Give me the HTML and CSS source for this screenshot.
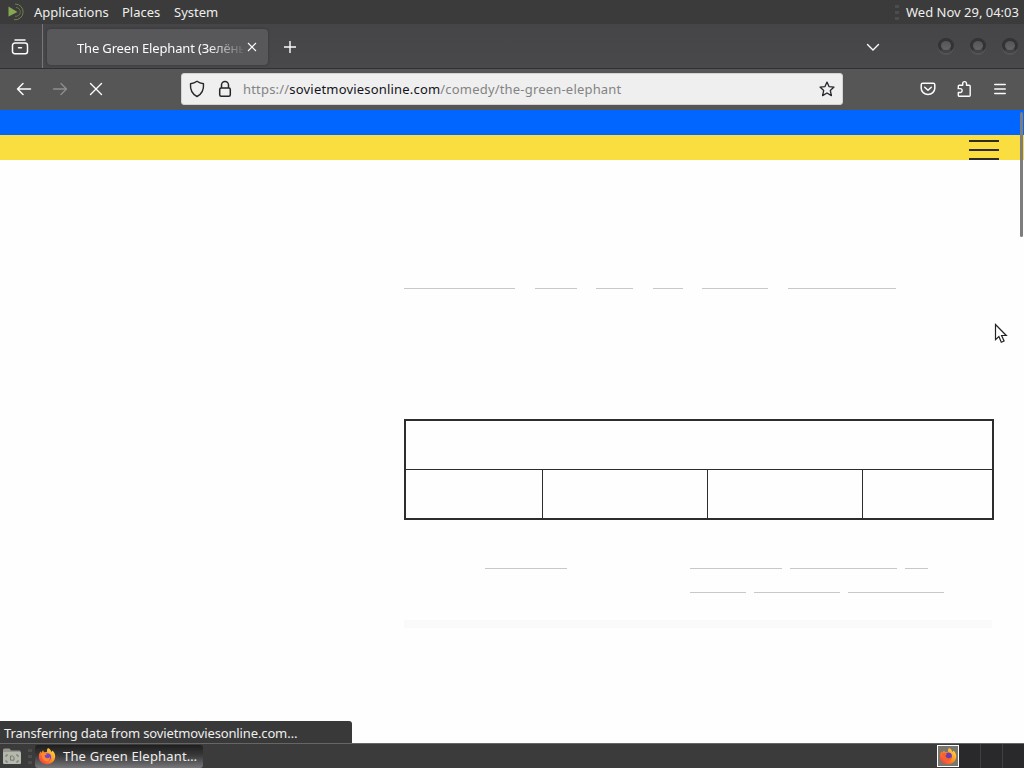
FILE: index.html
```
<!DOCTYPE html>
<html lang="en">
<head>
  <meta charset="utf-8">
  <title>The Green Elephant</title>
  <link rel="stylesheet" href="styles.css">
</head>
<body>
  <div class="desktop">

    <!-- desktop panel -->
    <header class="panel">
      <svg class="logo" width="22" height="24" viewBox="0 0 22 24" fill="none">
        <path d="M1.500 6.500 10.500 12 1.500 16.500z" fill="#87a752"/>
        <path d="M8 4a7.900 7.900 0 1 1-1 15.700" stroke="#6d8449"/>
        <path d="M9 7.500a4.400 4.400 0 1 1-1 8.700" stroke="#66734f"/>
      </svg>
      <nav class="menu">
        <span class="apps">Applications</span>
        <span class="places">Places</span>
        <span class="system">System</span>
      </nav>
      <div class="grip"><i></i><i></i><i></i></div>
      <span class="clock">Wed Nov 29, 04:03</span>
    </header>

    <!-- tabs -->
    <div class="tabbar">
      <div class="view">
        <svg width="18" height="18" viewBox="0 0 18 18" fill="none" stroke="#fbfbfe" stroke-width="1.500" stroke-linecap="round">
          <path d="M4 2h10"/>
          <path d="M1.500 7.500a2.500 2.500 0 0 1 2.500-2.500h10a2.500 2.500 0 0 1 2.500 2.500v6a2.200 2.200 0 0 1-2.200 2.200h-10.600a2.200 2.200 0 0 1-2.200-2.200zM7.500 9.800h3"/>
        </svg>
      </div>
      <div class="tab">
        <span class="tab-title">The Green Elephant (Зелёны</span>
        <svg width="10" height="10" viewBox="0 0 10 10" stroke="#fbfbfe" stroke-width="1.100"><path d="M1 1l8 8M9 1l-8 8"/></svg>
      </div>
      <svg class="plus" width="14" height="14" viewBox="0 0 14 14" stroke="#fbfbfe" stroke-width="1.400"><path d="M7 1v12M1 7h12"/></svg>
      <svg class="chevron" width="14" height="9" viewBox="0 0 14 9" fill="none" stroke="#fbfbfe" stroke-width="1.400" stroke-linecap="round"><path d="M1.500 1.500 7 7l5.500-5.500"/></svg>
      <div class="window-buttons"><i></i><i></i><i></i></div>
    </div>

    <!-- navigation -->
    <div class="toolbar">
      <svg class="back" width="16" height="14" viewBox="0 0 16 14" fill="none" stroke="#fbfbfe" stroke-width="1.500" stroke-linecap="round" stroke-linejoin="round"><path d="M14.500 7H1.500M7 1.500 1.500 7 7 12.500"/></svg>
      <svg class="forward" width="16" height="14" viewBox="0 0 16 14" fill="none" stroke="#8e8e8f" stroke-width="1.300" stroke-linecap="round" stroke-linejoin="round"><path d="M1.500 7H14.500M9 1.500 14.500 7 9 12.500"/></svg>
      <svg class="stop" width="14" height="14" viewBox="0 0 14 14" stroke="#fbfbfe" stroke-width="1.400" stroke-linecap="round"><path d="M1.500 1.500l11 11M12.500 1.500l-11 11"/></svg>
      <div class="urlbar">
        <svg class="shield" width="16" height="18" viewBox="0 0 16 18" fill="none" stroke="#26262b" stroke-width="1.400" stroke-linejoin="round"><path d="M8 1.300c2 1.500 4.100 2.200 6.500 2.500.4 5.500-1.300 10.200-6.500 12.700C2.800 14 1.100 9.300 1.500 3.800 3.900 3.500 6 2.800 8 1.300z"/></svg>
        <svg class="lock" width="14" height="18" viewBox="0 0 14 18" fill="none" stroke="#26262b" stroke-width="1.500"><rect x="1.700" y="8" width="10.600" height="8.300" rx="1.500"/><path d="M3.500 8V5a3.500 3.500 0 0 1 7 0v3"/></svg>
        <span class="url">https://<b>sovietmoviesonline.com</b>/comedy/the-green-elephant</span>
        <svg class="star" width="16" height="16" viewBox="0 0 16 16" fill="none" stroke="#26262b" stroke-width="1.300" stroke-linejoin="round"><path d="M8 1.100l2 4.500 5 .5-3.700 3.400 1.100 5.100L8 12l-4.400 2.600 1.100-5.100L1 6.100l5-.5z"/></svg>
      </div>
      <svg class="pocket" width="16" height="14" viewBox="0 0 16 14" fill="none" stroke="#fbfbfe" stroke-width="1.500" stroke-linecap="round" stroke-linejoin="round"><path d="M2.700 1.200h10.600a1.500 1.500 0 0 1 1.500 1.500v3.500a6.800 6.300 0 0 1-13.600 0V2.700a1.500 1.500 0 0 1 1.500-1.500z"/><path d="M4.700 5.200 8 8.300l3.300-3.100"/></svg>
      <svg class="puzzle" width="16" height="18" viewBox="0 0 16 18" fill="none" stroke="#fbfbfe" stroke-width="1.400" stroke-linejoin="round"><path d="M2.300 8V6.300a1 1 0 0 1 1-1H6.700V3.500a1.900 1.900 0 0 1 3.800 0v1.800h2.700a1 1 0 0 1 1 1v9a1 1 0 0 1-1 1H3.300a1 1 0 0 1-1-1v-2.800h1.900a1.900 1.900 0 0 0 0-3.900H1.500"/></svg>
      <svg class="hamburger" width="12" height="12" viewBox="0 0 12 12" stroke="#fbfbfe" stroke-width="1.300" stroke-linecap="round"><path d="M.7 1.500h10.600M.7 6h10.600M.7 10.500h10.600"/></svg>
    </div>

    <!-- web page -->
    <main class="page">
      <div class="blue"></div>
      <div class="yellow"><div class="burger"><i></i><i></i><i></i></div></div>
      <div class="content">
        <div class="links genres">
          <i class="w111"></i><i class="w42"></i><i class="w37"></i><i class="w30"></i><i class="w66"></i><i class="w108"></i>
        </div>
        <div class="player">
          <div class="player-top"></div>
          <div class="player-tabs"><i></i><i></i><i></i><i></i></div>
        </div>
        <div class="credits">
          <div class="links director"><i class="w82"></i></div>
          <div class="actors">
            <div class="links"><i class="w92"></i><i class="w107"></i><i class="w23"></i></div>
            <div class="links"><i class="w56"></i><i class="w86"></i><i class="w96"></i></div>
          </div>
        </div>
        <div class="divider"></div>
      </div>
      <div class="scrollbar"></div>
      <div class="status">Transferring data from sovietmoviesonline.com…</div>
      <svg class="cursor" width="14" height="22" viewBox="0 0 14 22"><path d="M1.500 1.500v15.200l3.400-3.200 2.400 5.700 2.800-1.200-2.500-5.500h4.700z" fill="#fff" stroke="#222" stroke-width="1.200"/></svg>
    </main>

    <!-- taskbar -->
    <footer class="taskbar">
      <svg class="folder" width="20" height="18" viewBox="0 0 20 18">
        <path d="M1 3q0-1.500 1.500-1.500h5L9 3.500h8.500q1 0 1 1V7H1z" fill="#969990"/>
        <rect x="1" y="5" width="18" height="12" rx="1" fill="#b5b8ac"/>
        <path d="M6 8H4v2M14 8h2v2M6 15H4v-2M14 15h2v-2M8.500 9h2l1.500 1.200v3H8.500z" fill="none" stroke="#747870"/>
      </svg>
      <div class="grip"><i></i><i></i><i></i></div>
      <div class="task">
        <svg width="18" height="18" viewBox="0 0 18 18">
          <defs>
            <linearGradient id="fire" x1="1" y1="0" x2="0" y2="1"><stop offset="0" stop-color="#fff04a"/><stop offset=".5" stop-color="#ff8a1e"/><stop offset="1" stop-color="#f12c52"/></linearGradient>
          </defs>
          <path id="fox" d="M10 1c2 1 3 2.500 3.500 4 .6-.4.700-1 .7-1.500C16.500 5 17.300 7.500 17.200 9.700 17 14 13.500 17.200 9 17.200S.8 13.800.8 9.500c0-2.400 1-4.300 2-5.300L3.200 6 5 3.300l1 2 3-.3C8.700 3.500 9 2 10 1z" fill="url(#fire)"/>
          <circle cx="9.300" cy="10" r="3.800" fill="#7846c8"/>
          <path d="M3.500 6.500Q6 5 9 7.300L6.500 8.800q0 2 2.500 2.400 2 .2 3-1.200.4 4-3.500 4.300Q4 14 3.500 6.500z" fill="#ff8a2a"/>
        </svg>
        <span>The Green Elephant…</span>
      </div>
      <div class="tray">
        <div class="tray-icon">
          <svg width="18" height="18" viewBox="0 0 18 18">
            <use href="#fox"/>
            <circle cx="9.300" cy="9" r="3.600" fill="#6b3bb4"/>
            <path d="M3 6.500Q6 5 8 7L6.500 8.800q0 2 2.500 2.400 2 .2 3-1.200.4 4-3.500 4.300Q4 14 3 6.500z" fill="#f5632f"/>
          </svg>
        </div>
        <div class="workspaces"><i></i><i></i><i></i></div>
      </div>
    </footer>

  </div>
</body>
</html>
```
FILE: styles.css
```
* {
  box-sizing: border-box;
}

body {
  margin: 0;
  font-family: "Noto Sans", sans-serif;
  font-size: 13px;
  color: #eeeeec;
}

svg {
  display: block;
  flex: none;
}

i {
  display: block;
  flex: none;
}

.desktop {
  width: 1024px;
  height: 768px;
  display: flex;
  flex-direction: column;
  overflow: hidden;
}

/* top panel */
.panel {
  height: 24px;
  display: flex;
  align-items: center;
  padding-left: 7px;
  background: #3b3b3b;
  line-height: 24px;
  white-space: nowrap;
}

.menu {
  display: flex;
  flex: 1;
  margin-left: 5px;
}

.apps {
  width: 88px;
}

.places {
  width: 52px;
}

.grip {
  display: flex;
  flex-direction: column;
  gap: 3px;
}

.grip i {
  width: 4px;
  height: 3px;
  background: #4d4d4d;
}

.clock {
  width: 118px;
  margin-left: 7px;
}

/* tabs */
.tabbar {
  height: 45px;
  display: flex;
  align-items: center;
  padding-top: 2px;
  background: linear-gradient(#454548, #49494c);
  border-bottom: 1px solid #303033;
}

.view {
  width: 43px;
  height: 44px;
  padding: 14px 0 0 11px;
  margin-top: -2px;
  border-right: 1px solid #77777a;
}

.tab {
  width: 221px;
  height: 36px;
  margin-left: 4px;
  padding: 0 11px 0 30px;
  display: flex;
  align-items: center;
  justify-content: space-between;
  background: #58585a;
  border-radius: 4px;
  box-shadow: 0 0 3px #343436;
}

.tab-title {
  width: 166px;
  padding-top: 1px;
  overflow: hidden;
  white-space: nowrap;
  color: #fbfbfe;
  letter-spacing: -0.160px;
  -webkit-mask-image: linear-gradient(to right, #000 130px, transparent 170px);
  mask-image: linear-gradient(to right, #000 130px, transparent 170px);
}

.plus {
  margin-left: 15px;
}

.chevron {
  margin-left: 569px;
}

.window-buttons {
  display: flex;
  gap: 16px;
  margin: -3px 0 0 58px;
}

.window-buttons i {
  width: 16px;
  height: 15px;
  border-radius: 50%;
  border: 3px solid #333335;
  border-bottom-color: #434345;
  background: linear-gradient(#555557, #656567);
  box-shadow: 0 2px 1px #555557;
}

/* navigation */
.toolbar {
  height: 41px;
  display: flex;
  align-items: center;
  padding: 0 0 1px 16px;
  background: #565657;
}

.forward {
  margin-left: 20px;
}

.stop {
  margin-left: 21px;
}

.urlbar {
  width: 662px;
  height: 32px;
  margin-left: 78px;
  padding: 0 7px;
  display: flex;
  align-items: center;
  background: #efefef;
  border: 1px solid #d3d3d3;
  border-radius: 3px;
}

.lock {
  margin-left: 13px;
}

.url {
  flex: 1;
  margin-left: 11px;
  white-space: nowrap;
  color: #838383;
  letter-spacing: 0.190px;
}

.url b {
  font-weight: normal;
  color: #15141a;
}

.pocket {
  margin-left: 77px;
}

.puzzle {
  margin-left: 20px;
}

.hamburger {
  margin-left: 22px;
}

/* web page */
.page {
  position: relative;
  height: 633px;
  background: #fefefe;
}

.blue {
  height: 25px;
  background: #0066ff;
}

.yellow {
  height: 25px;
  padding: 5px 25px 0 0;
  display: flex;
  justify-content: flex-end;
  background: #fadd3e;
}

.burger {
  width: 30px;
  display: flex;
  flex-direction: column;
  gap: 7px;
}

.burger i {
  height: 2px;
  background: #2f2c24;
}

.content {
  width: 590px;
  margin-left: 404px;
  padding-top: 128px;
}

.links {
  display: flex;
  gap: 8px;
}

.links i {
  height: 1px;
  background: #c8c8c8;
}

.genres {
  gap: 19.600px;
}

.w111 { width: 111px; }
.w42 { width: 42px; }
.w37 { width: 37px; }
.w30 { width: 30px; }
.w66 { width: 66px; }
.w108 { width: 108px; }
.w82 { width: 82px; }
.w92 { width: 92px; }
.w107 { width: 107px; }
.w23 { width: 23px; }
.w56 { width: 56px; }
.w86 { width: 86px; }
.w96 { width: 96px; }

.player {
  height: 101px;
  margin-top: 130px;
  border: 2px solid #2d2d2f;
}

.player-top {
  height: 49px;
  border-bottom: 1px solid #2d2d2f;
}

.player-tabs {
  height: 48px;
  display: grid;
  grid-template-columns: 136px 165px 155px 130px;
}

.player-tabs i + i {
  border-left: 1px solid #2d2d2f;
}

.credits {
  display: grid;
  grid-template-columns: 205px 1fr;
  margin-top: 48px;
  padding-left: 81px;
}

.actors {
  display: flex;
  flex-direction: column;
  gap: 23px;
}

.divider {
  height: 8px;
  margin: 27px 2px 0 0;
  background: #fafafa;
}

.scrollbar {
  position: absolute;
  top: 2px;
  right: 1px;
  width: 3px;
  height: 125px;
  border-radius: 2px;
  background: #7d7d7d;
}

.status {
  position: absolute;
  left: 0;
  bottom: 0;
  width: 352px;
  height: 22px;
  padding-left: 4px;
  line-height: 24px;
  letter-spacing: -0.130px;
  background: #39393a;
  border-radius: 0 3px 0 0;
  white-space: nowrap;
}

.cursor {
  position: absolute;
  left: 994px;
  top: 213px;
}

/* taskbar */
.taskbar {
  height: 25px;
  display: flex;
  align-items: center;
  padding-left: 2px;
  background: #3b3b3c;
  border-top: 1px solid #666;
}

.taskbar .grip {
  margin-left: 6px;
}

.task {
  width: 168px;
  height: 23px;
  margin-left: 3px;
  padding-left: 3px;
  display: flex;
  align-items: center;
  gap: 7px;
  letter-spacing: 0.180px;
  background: linear-gradient(#1e1e1f, #39393a 45%, #77777a);
  border-radius: 3px;
  white-space: nowrap;
}

.tray {
  display: flex;
  align-items: center;
  margin-left: auto;
}

.tray-icon {
  width: 22px;
  height: 22px;
  padding: 1px;
  border: 1px solid #fff;
  background: #77776d;
}

.workspaces {
  display: flex;
  height: 24px;
  background: #29292b;
}

.workspaces i {
  width: 22px;
  border-right: 1px solid #404042;
}

.workspaces i:last-child {
  width: 21px;
  border: 0;
}
```
